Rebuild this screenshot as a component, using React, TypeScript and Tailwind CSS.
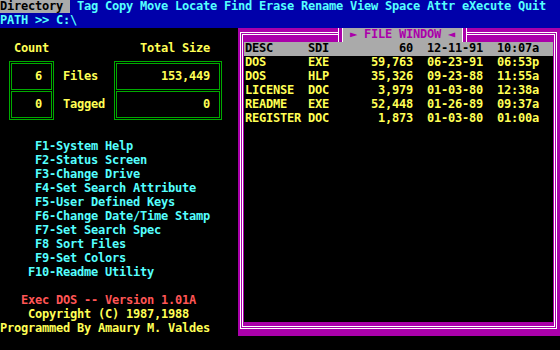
import React from 'react';

const C = 'text-[#55FFFF]';
const Y = 'text-[#FFFF55]';

function Line({ children, className = '' }: { children?: React.ReactNode; className?: string }) {
  return <div className={`h-[14px] leading-[12px] whitespace-pre ${className}`}>{children ?? ' '}</div>;
}

const files: [string, string, string, string, string][] = [
  ['DOS', 'EXE', '59,763', '06-23-91', '06:53p'],
  ['DOS', 'HLP', '35,326', '09-23-88', '11:55a'],
  ['LICENSE', 'DOC', '3,979', '01-03-80', '12:38a'],
  ['README', 'EXE', '52,448', '01-26-89', '09:37a'],
  ['REGISTER', 'DOC', '1,873', '01-03-80', '01:00a'],
];

function fmt(r: [string, string, string, string, string]) {
  return r[0].padEnd(9) + r[1].padEnd(3) + r[2].padStart(12) + '  ' + r[3] + '  ' + r[4];
}

const fkeys = [
  '     F1-System Help',
  '     F2-Status Screen',
  '     F3-Change Drive',
  '     F4-Set Search Attribute',
  '     F5-User Defined Keys',
  '     F6-Change Date/Time Stamp',
  '     F7-Set Search Spec',
  '     F8 Sort Files',
  '     F9-Set Colors',
  '    F10-Readme Utility',
];

function LeftPanel() {
  return (
    <div className={`w-[238px] h-[308px] flex flex-col ${Y}`}>
      <Line />
      <Line>{'  Count             Total Size'}</Line>
      <div className="h-[70px] flex items-start">
        <div className="ml-[9px] mt-[5px] w-[45px] h-[59px] border border-[#00AA00] p-[1px] flex flex-col gap-[1px]">
          <div className="flex-1 border border-[#00AA00] flex items-center justify-end pr-[9px]">
            <Line>6</Line>
          </div>
          <div className="flex-1 border border-[#00AA00] flex items-center justify-end pr-[9px]">
            <Line>0</Line>
          </div>
        </div>
        <div className="w-[60px] pl-[9px] pt-[14px] flex flex-col">
          <Line>Files</Line>
          <Line />
          <Line>Tagged</Line>
        </div>
        <div className="mt-[5px] w-[108px] h-[59px] border border-[#00AA00] p-[1px] flex flex-col gap-[1px]">
          <div className="flex-1 border border-[#00AA00] flex items-center justify-end pr-[9px]">
            <Line>153,449</Line>
          </div>
          <div className="flex-1 border border-[#00AA00] flex items-center justify-end pr-[9px]">
            <Line>0</Line>
          </div>
        </div>
      </div>
      <Line />
      {fkeys.map((k) => (
        <Line key={k} className={C}>
          {k}
        </Line>
      ))}
      <Line />
      <Line className="text-[#FF5555]">{'   Exec DOS -- Version 1.01A'}</Line>
      <Line>{'    Copyright (C) 1987,1988'}</Line>
      <Line>{'Programmed By Amaury M. Valdes'}</Line>
    </div>
  );
}

function FileWindow() {
  return (
    <div className="relative w-[322px] h-[308px] bg-[#AA00AA] pl-[2px] pt-[4px] pr-[3px] pb-[7px]">
      <div className="h-full border border-white p-[1px]">
        <div className="h-full border border-white bg-[#AA00AA] pl-[1px] pr-[1px] pt-[7px] pb-[4px]">
          <div className="h-full bg-black">
            <Line className="bg-[#AAAAAA] text-black pl-[1px]">
              {fmt(['DESC', 'SDI', '60', '12-11-91', '10:07a'])}
            </Line>
            {files.map((f) => (
              <Line key={f[0] + f[1]} className={`${Y} pl-[1px]`}>
                {fmt(f)}
              </Line>
            ))}
          </div>
        </div>
      </div>
      <div className="absolute left-[100px] top-0 h-[14px] flex">
        <div className="w-[5px] h-full bg-[#AA00AA] border-x border-white" />
        <div className="w-[119px] h-full bg-[#AAAAAA] text-[#AA00AA] leading-[12px] whitespace-pre">
          {' \u25BA FILE WINDOW \u25C4 '}
        </div>
        <div className="w-[5px] h-full bg-[#AA00AA] border-x border-white" />
      </div>
    </div>
  );
}

export default function App() {
  return (
    <div className="w-[560px] h-[350px] bg-black overflow-hidden font-['DejaVu_Sans_Mono','Liberation_Mono',monospace] font-bold text-[12px] tracking-[-0.225px]">
      <div className="bg-[#0000AA]">
        <Line className={C}>
          <span className="bg-[#AAAAAA] text-black">Directory </span>
          {' Tag Copy Move Locate Find Erase Rename View Space Attr eXecute Quit'}
        </Line>
        <Line className={C}>{'PATH >> C:\\'}</Line>
      </div>
      <div className="flex">
        <LeftPanel />
        <FileWindow />
      </div>
    </div>
  );
}
